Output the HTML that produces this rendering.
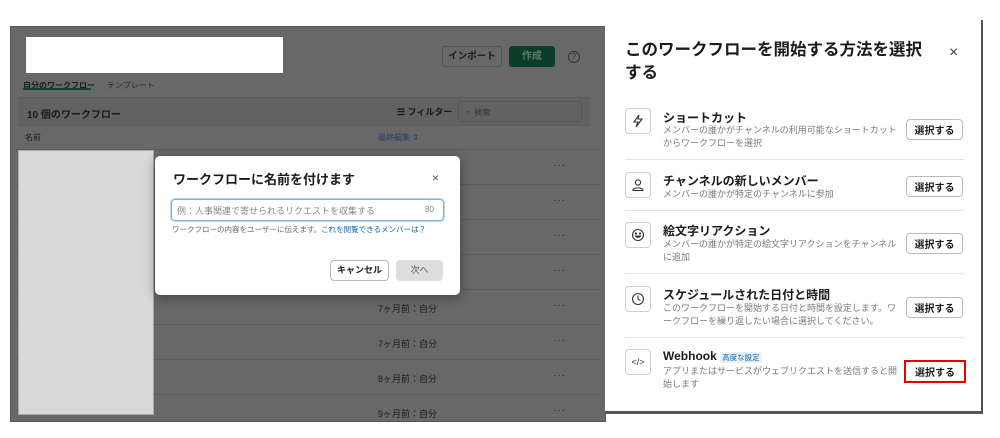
<!DOCTYPE html>
<html><head><meta charset="utf-8"><style>
*{margin:0;padding:0;box-sizing:border-box}
body{width:1000px;height:438px;background:#fff;position:relative;overflow:hidden;font-family:"Liberation Sans","Noto Sans CJK JP",sans-serif;color:#1d1c1d}
.a{position:absolute;white-space:nowrap}
#left{position:absolute;left:10px;top:26px;width:596px;height:396px;background:#686868;border:1px solid #555;overflow:hidden}
.dl{position:absolute;left:5px;right:5px;height:1px;background:#5c5c5c}
.dt{font-size:9px;color:#1a1a1a}
.dots{font-size:10px;color:#1a1a1a;letter-spacing:1px}
#modal{position:absolute;left:155px;top:156px;width:305px;height:139px;background:#fff;border-radius:5px;box-shadow:0 3px 12px rgba(0,0,0,.35)}
#right{position:absolute;left:605px;top:20px;width:378px;height:394px;background:#fff;border-right:2px solid #555;border-bottom:3px solid #555}
.ic{position:absolute;left:20px;width:26px;height:26px;border:1px solid #cfcfcf;border-radius:4px;display:flex;align-items:center;justify-content:center}
.tt{position:absolute;left:58px;font-size:12px;font-weight:bold;color:#1d1c1d;white-space:nowrap}
.ds{position:absolute;left:58px;font-size:9px;color:#7a7a7a;line-height:13px;width:234px}
.btn{position:absolute;left:301px;width:57px;height:21px;border:1px solid #bbb;border-radius:4px;font-size:10px;font-weight:bold;display:flex;align-items:center;justify-content:center}
.sep{position:absolute;left:20px;width:339px;height:1px;background:#e3e3e3}
</style></head><body>
<div id="left">
 <div class="a" style="left:15px;top:10px;width:257px;height:36px;background:#fff"></div>
 <div class="a" style="left:431px;top:19px;width:60px;height:21px;border:1px solid #555;border-radius:3px;font-size:9.5px;font-weight:bold;color:#1a1a1a;text-align:center;line-height:19px">インポート</div>
 <div class="a" style="left:498px;top:19px;width:46px;height:21px;background:#0c3c2a;border-radius:3px;font-size:10px;font-weight:bold;color:#5c7a6e;text-align:center;line-height:21px">作成</div>
 <div class="a" style="left:557px;top:24px;width:12px;height:12px;border:1px solid #333;border-radius:50%;font-size:8px;text-align:center;line-height:10px;color:#333">?</div>
 <div class="a dt" style="left:12px;top:53px;font-weight:bold;font-size:8px">自分のワークフロー</div>
 <div class="a dt" style="left:96px;top:53px;color:#2a2a2a;font-size:8px">テンプレート</div>
 <div class="a" style="left:12px;top:61px;width:68px;height:2px;background:#0c4a35"></div>
 <div class="a" style="left:7px;top:70px;width:572px;height:29px;background:#626262;border-top:1px solid #5c5c5c;border-bottom:1px solid #5c5c5c"></div>
 <div class="a" style="left:16px;top:79px;font-size:10px;font-weight:bold;color:#1a1a1a">10 個のワークフロー</div>
 <div class="a dt" style="left:386px;top:78px;font-weight:bold">☰ フィルター</div>
 <div class="a" style="left:447px;top:74px;width:124px;height:21px;border:1px solid #555;border-radius:3px;font-size:8px;color:#333;padding:5px 0 0 6px">○&nbsp; 検索</div>
 <div class="a dt" style="left:14px;top:105px;font-size:8px">名前</div>
 <div class="a dt" style="left:367px;top:105px;font-size:8px;color:#1f3f66">最終編集 ⇕</div>
 <div class="dl" style="top:122px"></div>
 <div class="dl" style="top:157px"></div>
 <div class="dl" style="top:192px"></div>
 <div class="dl" style="top:227px"></div>
 <div class="dl" style="top:262px"></div>
 <div class="dl" style="top:297px"></div>
 <div class="dl" style="top:332px"></div>
 <div class="dl" style="top:367px"></div>
 <div class="a" style="left:7px;top:123px;width:136px;height:265px;background:#d9d9d9;border:1px solid #aaa"></div>
 <div class="a dots" style="left:542px;top:133px">···</div>
 <div class="a dots" style="left:542px;top:168px">···</div>
 <div class="a dots" style="left:542px;top:203px">···</div>
 <div class="a dots" style="left:542px;top:238px">···</div>
 <div class="a dots" style="left:542px;top:273px">···</div>
 <div class="a dots" style="left:542px;top:308px">···</div>
 <div class="a dots" style="left:542px;top:343px">···</div>
 <div class="a dots" style="left:542px;top:378px">···</div>
 <div class="a dt" style="left:367px;top:275px">7ヶ月前：自分</div>
 <div class="a dt" style="left:367px;top:310px">7ヶ月前：自分</div>
 <div class="a dt" style="left:367px;top:345px">8ヶ月前：自分</div>
 <div class="a dt" style="left:367px;top:380px">9ヶ月前：自分</div>
</div>
<div id="modal">
 <div class="a" style="left:18px;top:13px;font-size:13px;font-weight:bold">ワークフローに名前を付けます</div>
 <div class="a" style="left:277px;top:15px;font-size:12px;color:#555">×</div>
 <div class="a" style="left:16px;top:43px;width:273px;height:22px;border:1px solid #7fb0d8;border-radius:4px;box-shadow:0 0 0 1px #b8d6ee"></div>
 <div class="a" style="left:22px;top:48px;font-size:9px;color:#888">例：人事関連で寄せられるリクエストを収集する</div>
 <div class="a" style="left:270px;top:49px;font-size:8px;color:#888">80</div>
 <div class="a" style="left:17px;top:68px;font-size:7.5px;color:#666">ワークフローの内容をユーザーに伝えます。<span style="color:#1264a3">これを閲覧できるメンバーは？</span></div>
 <div class="a" style="left:175px;top:104px;width:59px;height:21px;border:1px solid #bbb;border-radius:4px;font-size:9px;font-weight:bold;text-align:center;line-height:19px">キャンセル</div>
 <div class="a" style="left:241px;top:104px;width:47px;height:21px;background:#dddddd;border-radius:4px;font-size:9px;color:#555;text-align:center;line-height:21px">次へ</div>
</div>
<div id="right">
 <div class="a" style="left:20px;top:19px;font-size:16.5px;font-weight:bold;line-height:23px">このワークフローを開始する方法を選択<br>する</div>
 <div class="a" style="left:344px;top:24px;font-size:16px;color:#444">×</div>

 <div class="ic" style="top:88px"><svg width="14" height="14" viewBox="0 0 14 14" fill="none" stroke="#333" stroke-width="1.1"><path d="M8 1 L3 8 H7 L5 13 L11 5 H7 Z"/></svg></div>
 <div class="tt" style="top:89px">ショートカット</div>
 <div class="ds" style="top:104px">メンバーの誰かがチャンネルの利用可能なショートカットからワークフローを選択</div>
 <div class="btn" style="top:99px">選択する</div>
 <div class="sep" style="top:139px"></div>

 <div class="ic" style="top:152px"><svg width="14" height="14" viewBox="0 0 14 14" fill="none" stroke="#333" stroke-width="1.1"><circle cx="7" cy="4.5" r="2.6"/><path d="M2 12.5 C2 9 12 9 12 12.5 Z"/></svg></div>
 <div class="tt" style="top:152px">チャンネルの新しいメンバー</div>
 <div class="ds" style="top:168px">メンバーの誰かが特定のチャンネルに参加</div>
 <div class="btn" style="top:156px">選択する</div>
 <div class="sep" style="top:190px"></div>

 <div class="ic" style="top:202px"><svg width="14" height="14" viewBox="0 0 14 14" fill="none" stroke="#333" stroke-width="1.1"><circle cx="7" cy="7" r="5.5"/><circle cx="5" cy="5.5" r=".6" fill="#333"/><circle cx="9" cy="5.5" r=".6" fill="#333"/><path d="M4.5 8 Q7 11 9.5 8 Z" fill="#333"/></svg></div>
 <div class="tt" style="top:202px">絵文字リアクション</div>
 <div class="ds" style="top:218px">メンバーの誰かが特定の絵文字リアクションをチャンネルに追加</div>
 <div class="btn" style="top:213px">選択する</div>
 <div class="sep" style="top:253px"></div>

 <div class="ic" style="top:266px"><svg width="14" height="14" viewBox="0 0 14 14" fill="none" stroke="#333" stroke-width="1.1"><circle cx="7" cy="7" r="5.5"/><path d="M7 3.5 V7 L9.5 8.5"/></svg></div>
 <div class="tt" style="top:266px">スケジュールされた日付と時間</div>
 <div class="ds" style="top:282px">このワークフローを開始する日付と時間を設定します。ワークフローを繰り返したい場合に選択してください。</div>
 <div class="btn" style="top:277px">選択する</div>
 <div class="sep" style="top:317px"></div>

 <div class="ic" style="top:329px"><span style="font-size:9px;color:#333">&lt;/&gt;</span></div>
 <div class="tt" style="top:329px">Webhook <span style="font-size:7.5px;font-weight:normal;color:#1264a3;background:#e8f2fa;padding:1px 2px">高度な設定</span></div>
 <div class="ds" style="top:345px">アプリまたはサービスがウェブリクエストを送信すると開始します</div>
 <div class="btn" style="top:340px;left:299px;width:62px;height:23px;border:2px solid #e60000;border-radius:0">選択する</div>
</div>
</body></html>
